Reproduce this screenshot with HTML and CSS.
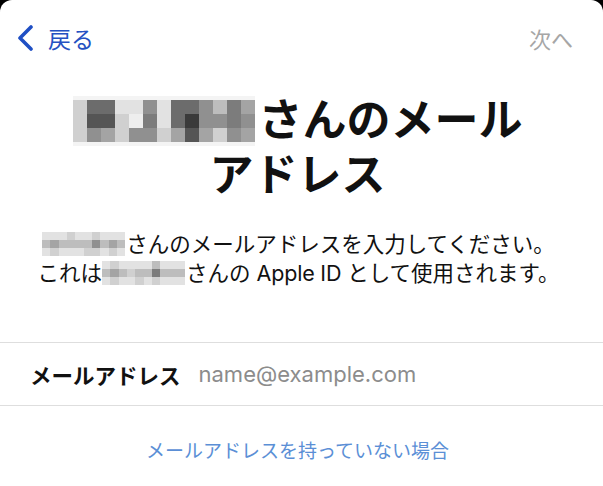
FILE: index.html
```html
<!DOCTYPE html>
<html lang="ja">

<head>
  <meta charset="UTF-8">
  <meta name="viewport" content="width=device-width, initial-scale=1.0">
  <title>メールアドレス</title>
  <link rel="stylesheet" href="styles.css">
</head>

<body>
  <div class="screen">
    <div class="nav">
      <a href="#" class="back">
        <svg class="chevron" width="20" height="26" viewBox="0 0 20 26">
          <path d="M15 2 L4 13 L15 24" fill="none" stroke="#1f4fc4" stroke-width="3.6" stroke-linecap="round" stroke-linejoin="round" />
        </svg>
        <span>戻る</span>
      </a>
      <span class="next">次へ</span>
    </div>

    <h1 class="title">
      <span class="mosaic big">
        <i class="p2"></i><i class="p7"></i><i class="p7"></i><i class="p1"></i><i class="p1"></i><i class="p5"></i><i class="p1"></i><i class="p7"></i><i class="p7"></i><i class="p5"></i><i class="p3"></i><i class="p6"></i><i class="p4"></i>
        <i class="p2"></i><i class="p8"></i><i class="p8"></i><i class="p2"></i><i class="p0"></i><i class="p6"></i><i class="p1"></i><i class="p7"></i><i class="p9"></i><i class="p5"></i><i class="p5"></i><i class="p6"></i><i class="p5"></i>
        <i class="p2"></i><i class="p5"></i><i class="p4"></i><i class="p2"></i><i class="p5"></i><i class="p5"></i><i class="p2"></i><i class="p4"></i><i class="p8"></i><i class="p4"></i><i class="p2"></i><i class="p5"></i><i class="p4"></i>
      </span>さんのメール<br>アドレス
    </h1>

    <p class="desc">
      <span class="mosaic small">
        <i class="p1"></i><i class="p1"></i><i class="p1"></i><i class="p2"></i><i class="p1"></i><i class="p1"></i><i class="p2"></i><i class="p1"></i><i class="p1"></i><i class="p1"></i>
        <i class="p3"></i><i class="p4"></i><i class="p3"></i><i class="p3"></i><i class="p3"></i><i class="p3"></i><i class="p5"></i><i class="p3"></i><i class="p4"></i><i class="p3"></i>
        <i class="p1"></i><i class="p2"></i><i class="p1"></i><i class="p1"></i><i class="p1"></i><i class="p2"></i><i class="p2"></i><i class="p1"></i><i class="p2"></i><i class="p1"></i>
      </span>さんのメールアドレスを入力してください。<br>
      これは<span class="mosaic small">
        <i class="p1"></i><i class="p2"></i><i class="p1"></i><i class="p1"></i><i class="p1"></i><i class="p1"></i><i class="p3"></i><i class="p1"></i><i class="p1"></i><i class="p1"></i>
        <i class="p3"></i><i class="p4"></i><i class="p3"></i><i class="p2"></i><i class="p3"></i><i class="p3"></i><i class="p6"></i><i class="p3"></i><i class="p3"></i><i class="p3"></i>
        <i class="p1"></i><i class="p2"></i><i class="p1"></i><i class="p1"></i><i class="p2"></i><i class="p1"></i><i class="p2"></i><i class="p1"></i><i class="p1"></i><i class="p1"></i>
      </span>さんの <span class="latin">Apple ID</span> として使用されます。
    </p>

    <div class="field">
      <label class="field-label" for="email">メールアドレス</label>
      <input id="email" class="field-input" type="email" placeholder="name@example.com">
    </div>

    <a href="#" class="no-email">メールアドレスを持っていない場合</a>
  </div>
</body>

</html>
```

FILE: styles.css
```css
* {
  margin: 0;
  padding: 0;
  box-sizing: border-box;
}

a {
  text-decoration: none;
}

body {
  width: 603px;
  height: 486px;
  overflow: hidden;
  background-color: #000;
  font-family: "Inter", "Noto Sans CJK JP", sans-serif;
  color: #111;
}

.screen {
  height: 486px;
  background-color: #fff;
  border-radius: 12px 12px 0 0;
}

/* ナビゲーション */
.nav {
  display: flex;
  justify-content: space-between;
  align-items: center;
  height: 76px;
  padding: 0 30px 0 16px;
}

.nav .back {
  display: flex;
  align-items: center;
  gap: 12px;
  color: #2451c2;
  font-size: 23px;
}

.nav .next {
  color: #a6a6a6;
  font-size: 22px;
}

/* タイトル */
.title {
  text-align: center;
  font-size: 44px;
  font-weight: 700;
  line-height: 55px;
  padding: 17px 0 0 0;
  margin-right: 8px;
}

.mosaic {
  display: inline-grid;
  vertical-align: middle;
  filter: blur(0.4px);
}

.mosaic i {
  display: block;
}

.mosaic.big {
  grid-template-columns: repeat(13, 14px);
  grid-auto-rows: 14px;
  margin: -6px 4px 0 0;
  box-shadow: 0 -4px 0 #f4f4f4, 0 4px 0 #f4f4f4;
}

.mosaic.small {
  grid-template-columns: repeat(10, 8.3px);
  grid-auto-rows: 8px;
  margin: -4px 1px 0 0;
}

.p0 { background-color: #eeeeee; }
.p1 { background-color: #e2e2e2; }
.p2 { background-color: #d0d0d0; }
.p3 { background-color: #bdbdbd; }
.p4 { background-color: #a4a4a4; }
.p5 { background-color: #909090; }
.p6 { background-color: #7c7c7c; }
.p7 { background-color: #6c6c6c; }
.p8 { background-color: #555555; }
.p9 { background-color: #3a3a3a; }

/* 説明文 */
.desc {
  text-align: center;
  font-size: 21.5px;
  line-height: 29px;
  padding: 27px 0 0 0;
  margin-right: 6px;
}

.desc .latin {
  font-family: "Inter", sans-serif;
  letter-spacing: -0.2px;
}

/* 入力欄 */
.field {
  display: flex;
  align-items: center;
  gap: 18px;
  height: 64px;
  margin-top: 54px;
  padding: 0 30px;
  border-top: 1px solid #dedede;
  border-bottom: 1px solid #dedede;
}

.field-label {
  font-size: 21.5px;
  font-weight: 700;
  color: #111;
}

.field-input {
  flex: 1;
  border: none;
  outline: none;
  font-family: "Inter", sans-serif;
  font-size: 22px;
  color: #111;
}

.field-input::placeholder {
  color: #8c8c8c;
}

.no-email {
  display: block;
  text-align: center;
  margin: 30px 8px 0 0;
  font-size: 19px;
  color: #5b8fd6;
}
```
